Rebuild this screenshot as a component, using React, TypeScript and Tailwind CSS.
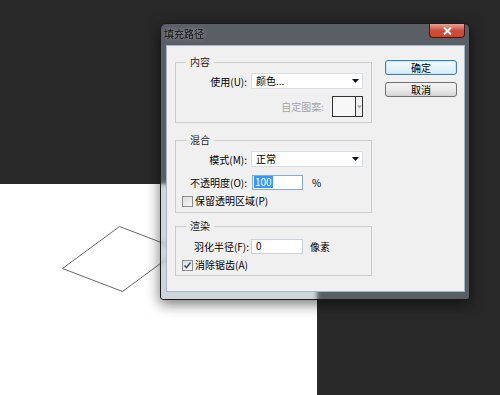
import React from "react";

function Caret({ className = "" }: { className?: string }) {
  return (
    <svg width="7" height="4" viewBox="0 0 7 4" className={className}>
      <path d="M0 0h7L3.5 4z" fill="currentColor" />
    </svg>
  );
}

function Dropdown({ value }: { value: string }) {
  return (
    <div className="flex h-[16px] w-[112px] items-center justify-between border border-[#d9dce0] bg-white pl-[4px] pr-[3px] text-black">
      <span className="leading-[14px]">{value}</span>
      <Caret className="text-[#111]" />
    </div>
  );
}

function CheckRow({ checked, label }: { checked?: boolean; label: string }) {
  return (
    <div className="flex h-[16px] items-center pl-[6px]">
      <span className="flex h-[11px] w-[11px] items-center justify-center border border-[#8e8f8f] bg-gradient-to-br from-[#dcdcdc] to-[#f8f8f8]">
        {checked && (
          <svg width="9" height="9" viewBox="0 0 9 9">
            <path d="M1.5 4.5l2 2.2L7.5 1.5" fill="none" stroke="#3a4a70" strokeWidth="1.5" />
          </svg>
        )}
      </span>
      <span className="ml-[2px] leading-[16px]">{label}</span>
    </div>
  );
}

function Group({
  title,
  className = "",
  children,
}: {
  title: string;
  className?: string;
  children: React.ReactNode;
}) {
  return (
    <fieldset className={`border border-[#cbcbcb] ${className}`}>
      <legend className="ml-[10px] px-[4px] leading-[16px] text-[#1e1e1e]">{title}</legend>
      {children}
    </fieldset>
  );
}

export default function App() {
  return (
    <div className="relative h-[395px] w-[500px] overflow-hidden bg-[#282828] font-['Noto_Sans_CJK_SC',sans-serif]">
      {/* canvas */}
      <div className="h-[184px]" />
      <div className="h-[211px] w-[317px] bg-white">
        <svg width="317" height="211" viewBox="0 0 317 211" className="block">
          <path d="M119.5 42.5L62.5 84.5L122.5 107.5L179.5 65.5Z" fill="none" stroke="#6a6a6a" strokeWidth="1" />
        </svg>
      </div>

      {/* dialog */}
      <div className="absolute left-[160px] top-[23px] flex h-[277px] w-[310px] flex-col rounded-t-[6px] rounded-b-[3px] border border-[#1a1a1a] bg-[rgba(150,160,176,0.45)] pb-[7px] pl-[5px] pr-[4px] text-[10px] text-black shadow-[0_4px_14px_rgba(0,0,0,0.55)] backdrop-blur-[2px]">
        {/* title bar */}
        <div className="flex h-[21px] items-start">
          <span className="ml-[-2px] mt-[3px] leading-[14px] text-[#111] [text-shadow:0_0_5px_rgba(255,255,255,0.55)]">
            填充路径
          </span>
          <div className="ml-auto flex h-[14px] w-[36px] items-center justify-center rounded-b-[4px] border border-t-0 border-[#4b1710] bg-gradient-to-b from-[#e6a394] via-[#c9503d] to-[#d4432e]">
            <svg width="9" height="8" viewBox="0 0 9 8">
              <path d="M1 0.5l7 7M8 0.5l-7 7" stroke="#fff" strokeWidth="2" />
            </svg>
          </div>
        </div>

        {/* client */}
        <div className="flex h-[247px] items-start border border-[#a4b7cc] bg-[#f0f0f0] pl-[8px] pt-[8px]">
          <div className="flex w-[197px] flex-col">
            <Group title="内容" className="pb-[5px]">
              <div className="mt-[3px] flex h-[16px] items-center">
                <span className="w-[71px] text-right">使用(U):</span>
                <span className="ml-[4px]">
                  <Dropdown value="颜色..." />
                </span>
              </div>
              <div className="mt-[7px] flex items-center justify-end pr-[8px]">
                <span className="mr-[8px] text-[#a3a3a3]">自定图案:</span>
                <div className="flex h-[21px] w-[31px] border border-[#333]">
                  <div className="flex-1 bg-[#f7f7f7]" />
                  <div className="flex w-[7px] items-center justify-center border-l border-[#333] bg-[#f0f0f0]">
                    <Caret className="w-[5px] text-[#a8a8a8]" />
                  </div>
                </div>
              </div>
            </Group>

            <Group title="混合" className="mt-[9px] pb-[3px]">
              <div className="mt-[3px] flex h-[16px] items-center">
                <span className="w-[71px] text-right">模式(M):</span>
                <span className="ml-[4px]">
                  <Dropdown value="正常" />
                </span>
              </div>
              <div className="mt-[7px] flex h-[16px] items-center">
                <span className="w-[71px] text-right">不透明度(O):</span>
                <div className="ml-[5px] flex h-[15px] w-[51px] items-center border border-[#89a9cf] bg-white pl-[1px]">
                  <span className="bg-[#3399ff] px-[1px] leading-[12px] text-white">100</span>
                </div>
                <span className="ml-[9px]">%</span>
              </div>
              <div className="mt-[3px]">
                <CheckRow label="保留透明区域(P)" />
              </div>
            </Group>

            <Group title="渲染" className="mt-[5px] pb-[2px]">
              <div className="mt-[4px] flex h-[16px] items-center">
                <span className="w-[73px] text-right">羽化半径(F):</span>
                <div className="ml-[2px] flex h-[15px] w-[52px] items-center border border-[#c9d1da] bg-white pl-[4px]">
                  <span className="leading-[12px]">0</span>
                </div>
                <span className="ml-[7px]">像素</span>
              </div>
              <div className="mt-[3px]">
                <CheckRow checked label="消除锯齿(A)" />
              </div>
            </Group>
          </div>

          {/* buttons */}
          <div className="ml-[13px] mt-[6px] flex flex-col gap-[7px]">
            <div className="flex h-[15px] w-[72px] items-center justify-center rounded-[3px] border border-[#3c7fb1] bg-gradient-to-b from-[#f4fafe] to-[#d6ecf9] leading-[13px] shadow-[inset_0_0_0_1px_#c4e5f6]">
              确定
            </div>
            <div className="flex h-[15px] w-[72px] items-center justify-center rounded-[3px] border border-[#707070] bg-gradient-to-b from-[#f2f2f2] via-[#ebebeb] to-[#d4d4d4] leading-[13px]">
              取消
            </div>
          </div>
        </div>
      </div>
    </div>
  );
}
